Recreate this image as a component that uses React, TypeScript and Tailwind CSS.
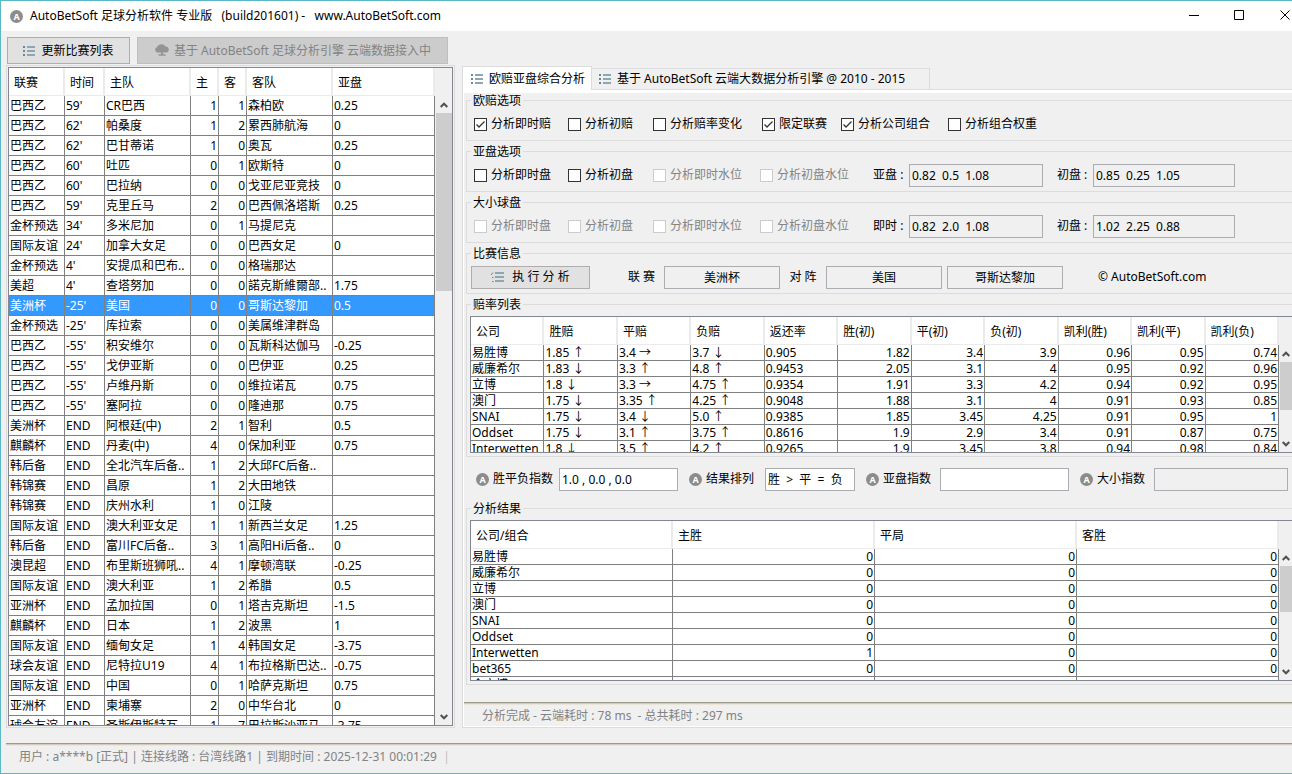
import React from "react";

type Match = [string, string, string, string, string, string, string];

const matches: Match[] = [
  ["巴西乙", "59'", "CR巴西", "1", "1", "森柏欧", "0.25"],
  ["巴西乙", "62'", "帕桑度", "1", "2", "累西肺航海", "0"],
  ["巴西乙", "62'", "巴甘蒂诺", "1", "0", "奥瓦", "0.25"],
  ["巴西乙", "60'", "吐匹", "0", "1", "欧斯特", "0"],
  ["巴西乙", "60'", "巴拉纳", "0", "0", "戈亚尼亚竞技", "0"],
  ["巴西乙", "59'", "克里丘马", "2", "0", "巴西佩洛塔斯", "0.25"],
  ["金杯预选", "34'", "多米尼加", "0", "1", "马提尼克", ""],
  ["国际友谊", "24'", "加拿大女足", "0", "0", "巴西女足", "0"],
  ["金杯预选", "4'", "安提瓜和巴布..", "0", "0", "格瑞那达", ""],
  ["美超", "4'", "查塔努加", "0", "0", "諾克斯維爾部..", "1.75"],
  ["美洲杯", "-25'", "美国", "0", "0", "哥斯达黎加", "0.5"],
  ["金杯预选", "-25'", "库拉索", "0", "0", "美属维津群岛", ""],
  ["巴西乙", "-55'", "积安维尔", "0", "0", "瓦斯科达伽马", "-0.25"],
  ["巴西乙", "-55'", "戈伊亚斯", "0", "0", "巴伊亚", "0.25"],
  ["巴西乙", "-55'", "卢维丹斯", "0", "0", "维拉诺瓦", "0.75"],
  ["巴西乙", "-55'", "塞阿拉", "0", "0", "隆迪那", "0.75"],
  ["美洲杯", "END", "阿根廷(中)", "2", "1", "智利", "0.5"],
  ["麒麟杯", "END", "丹麦(中)", "4", "0", "保加利亚", "0.75"],
  ["韩后备", "END", "全北汽车后备..", "1", "2", "大邱FC后备..", ""],
  ["韩锦赛", "END", "昌原", "1", "2", "大田地铁", ""],
  ["韩锦赛", "END", "庆州水利", "1", "0", "江陵", ""],
  ["国际友谊", "END", "澳大利亚女足", "1", "1", "新西兰女足", "1.25"],
  ["韩后备", "END", "富川FC后备..", "3", "1", "高阳Hi后备..", "0"],
  ["澳昆超", "END", "布里斯班狮吼..", "4", "1", "摩顿湾联", "-0.25"],
  ["国际友谊", "END", "澳大利亚", "1", "2", "希腊", "0.5"],
  ["亚洲杯", "END", "孟加拉国", "0", "1", "塔吉克斯坦", "-1.5"],
  ["麒麟杯", "END", "日本", "1", "2", "波黑", "1"],
  ["国际友谊", "END", "缅甸女足", "1", "4", "韩国女足", "-3.75"],
  ["球会友谊", "END", "尼特拉U19", "4", "1", "布拉格斯巴达..", "-0.75"],
  ["国际友谊", "END", "中国", "0", "1", "哈萨克斯坦", "0.75"],
  ["亚洲杯", "END", "柬埔寨", "2", "0", "中华台北", "0"],
  ["球会友谊", "END", "圣斯伊斯特瓦", "1", "7", "巴拉斯沙亚马", "-3.75"],
];

const odds: string[][] = [
  ["易胜博", "1.85 ↑", "3.4 →", "3.7 ↓", "0.905", "1.82", "3.4", "3.9", "0.96", "0.95", "0.74"],
  ["威廉希尔", "1.83 ↓", "3.3 ↑", "4.8 ↑", "0.9453", "2.05", "3.1", "4", "0.95", "0.92", "0.96"],
  ["立博", "1.8 ↓", "3.3 →", "4.75 ↑", "0.9354", "1.91", "3.3", "4.2", "0.94", "0.92", "0.95"],
  ["澳门", "1.75 ↓", "3.35 ↑", "4.25 ↑", "0.9048", "1.88", "3.1", "4", "0.91", "0.93", "0.85"],
  ["SNAI", "1.75 ↓", "3.4 ↓", "5.0 ↑", "0.9385", "1.85", "3.45", "4.25", "0.91", "0.95", "1"],
  ["Oddset", "1.75 ↓", "3.1 ↑", "3.75 ↑", "0.8616", "1.9", "2.9", "3.4", "0.91", "0.87", "0.75"],
  ["Interwetten", "1.8 ↓", "3.5 ↑", "4.2 ↑", "0.9265", "1.9", "3.45", "3.8", "0.94", "0.98", "0.84"],
];

const results: string[][] = [
  ["易胜博", "0", "0", "0"],
  ["威廉希尔", "0", "0", "0"],
  ["立博", "0", "0", "0"],
  ["澳门", "0", "0", "0"],
  ["SNAI", "0", "0", "0"],
  ["Oddset", "0", "0", "0"],
  ["Interwetten", "1", "0", "0"],
  ["bet365", "0", "0", "0"],
  ["金宝博", "0", "0", "0"],
];

function ListIcon() {
  return (
    <svg width="12" height="10" viewBox="0 0 12 10" className="shrink-0" shapeRendering="crispEdges" aria-hidden="true">
      <path d="M0 0h2v2H0zM0 4h2v2H0zM0 8h2v2H0z" fill="#66899a" />
      <path d="M4 0h8v2H4zM4 4h8v2H4zM4 8h8v2H4z" fill="#8ea6b2" />
    </svg>
  );
}

function RunIcon() {
  return (
    <svg width="13" height="11" viewBox="0 0 13 11" className="shrink-0" aria-hidden="true">
      <path d="M0 3L2 0.5M1 5.5h1.5M1 9.5h1.5" stroke="#66899a" fill="none" />
      <path d="M4 0h9v2H4zM4 4h9v2H4zM4 8h9v2H4z" fill="#8ea6b2" shapeRendering="crispEdges" />
    </svg>
  );
}

function CloudIcon() {
  return (
    <svg width="16" height="13" viewBox="0 0 16 13" className="shrink-0" aria-hidden="true">
      <path
        d="M3 8.6A2.9 2.9 0 0 1 2.8 3.3 4.8 4.2 0 0 1 11.6 2.5 3.2 3.2 0 0 1 13 8.6z"
        fill="#949494"
      />
      <path d="M7 8h2v3H7zM4.5 10.2h7v1.6h-7z" fill="#949494" />
    </svg>
  );
}

function Badge() {
  return (
    <span
      aria-hidden="true"
      className="flex size-[13px] shrink-0 items-center justify-center rounded-full bg-[#8c8c8c] text-[9px] leading-[13px] font-bold text-white"
    >
      A
    </span>
  );
}

function Chevron({ up = false }: { up?: boolean }) {
  return (
    <svg width="8" height="6" viewBox="0 0 8 6" aria-hidden="true">
      <path d={up ? "M0.7 5L4 1.7L7.3 5" : "M0.7 1L4 4.3L7.3 1"} fill="none" stroke="#505050" strokeWidth="2" />
    </svg>
  );
}

function ScrollBar({ className, thumb }: { className: string; thumb: string }) {
  return (
    <div className={`flex shrink-0 flex-col bg-[#f0f0f0] ${className}`} aria-hidden="true">
      <div className="h-[28px]" />
      <div className="flex h-[17px] items-center justify-center">
        <Chevron up />
      </div>
      <div className={`w-full bg-[#cdcdcd] ${thumb}`} />
      <div className="grow" />
      <div className="flex h-[17px] items-center justify-center">
        <Chevron />
      </div>
    </div>
  );
}

function HeadCell({ children }: { children: React.ReactNode }) {
  return (
    <th
      scope="col"
      className="h-7 border-r-2 border-b border-[#ebebeb] bg-white pt-[3px] pl-[5px] text-left font-normal whitespace-nowrap"
    >
      {children}
    </th>
  );
}

function CompanyTable({
  label,
  head,
  rows,
  leftCount,
}: {
  label: string;
  head: string[];
  rows: string[][];
  leftCount: number;
}) {
  return (
    <table aria-label={label} className="w-full table-fixed border-separate border-spacing-0">
      <thead>
        <tr>
          {head.map((h) => (
            <HeadCell key={h}>{h}</HeadCell>
          ))}
        </tr>
      </thead>
      <tbody>
        {rows.map((row) => (
          <tr key={row[0]}>
            {row.map((cell, i) => (
              <td
                key={i}
                className={`h-4 border-r border-b border-[#808080] bg-white p-0 leading-[15px] whitespace-nowrap ${
                  i < leftCount ? "pl-px text-left" : "pr-px text-right"
                }`}
              >
                {cell}
              </td>
            ))}
          </tr>
        ))}
      </tbody>
    </table>
  );
}

function Check({ label, checked = false, disabled = false }: { label: string; checked?: boolean; disabled?: boolean }) {
  return (
    <label className={`flex items-center gap-1 whitespace-nowrap ${disabled ? "text-[#838383]" : ""}`}>
      <span className="grid">
        <input
          type="checkbox"
          defaultChecked={checked}
          disabled={disabled}
          className="peer size-[13px] appearance-none border border-[#333333] bg-white [grid-area:1/1] disabled:border-[#cccccc]"
        />
        <svg
          viewBox="0 0 13 13"
          className="pointer-events-none invisible size-[13px] [grid-area:1/1] peer-checked:visible"
          aria-hidden="true"
        >
          <path d="M2.5 6.5L5 9L10.5 3.5" fill="none" stroke="#333333" strokeWidth="1.3" />
        </svg>
      </span>
      {label}
    </label>
  );
}

function Group({ title, className = "", children }: { title: string; className?: string; children: React.ReactNode }) {
  return (
    <fieldset className={`min-w-0 border border-r-0 border-[#dcdcdc] ${className}`}>
      <legend className="ml-1 px-0.5 leading-[15px]">{title}</legend>
      {children}
    </fieldset>
  );
}

const box = "h-[23px] min-w-0 border border-[#abadb3] px-0.5 outline-none";
const optionGrid = "grid h-8 items-center pl-[7px]";

function HandicapRow({ prefix, first, a, b, off }: { prefix: string; first: string; a: string; b: string; off: boolean }) {
  return (
    <div className={`${optionGrid} grid-cols-[94px_85px_107px_113px_36px_148px_36px_142px]`}>
      <Check label="分析即时盘" disabled={off} />
      <Check label="分析初盘" disabled={off} />
      <Check label="分析即时水位" disabled />
      <Check label="分析初盘水位" disabled />
      <label htmlFor={`${prefix}-a`} className="whitespace-nowrap">
        {first} :
      </label>
      <input id={`${prefix}-a`} readOnly defaultValue={a} className={`${box} w-[134px]`} />
      <label htmlFor={`${prefix}-b`} className="whitespace-nowrap">
        初盘 :
      </label>
      <input id={`${prefix}-b`} readOnly defaultValue={b} className={`${box} w-[142px]`} />
    </div>
  );
}

function IndexField({ id, label, value, className }: { id: string; label: string; value: string; className: string }) {
  return (
    <div className="flex items-center">
      <Badge />
      <label htmlFor={id} className="pl-1 whitespace-nowrap">
        {label}
      </label>
      <input id={id} defaultValue={value} className={`${box} ml-auto ${className}`} />
    </div>
  );
}

function Separator() {
  return (
    <div className="shrink-0">
      <div className="h-px bg-[#9d998a]" />
      <div className="h-px bg-[#d3ccba]" />
      <div className="h-px bg-[#eae6d9]" />
    </div>
  );
}

export default function App() {
  return (
    <div className="flex h-screen flex-col overflow-hidden border border-r-0 border-[#5bb8c9] bg-[#f0f0f0] font-['Noto_Sans','Noto_Sans_CJK_SC',sans-serif] text-[12px] leading-4 text-black">
      <header className="flex h-[30px] shrink-0 items-center bg-white pl-[9px]">
        <Badge />
        <h1 className="pl-[7px] whitespace-pre">AutoBetSoft 足球分析软件 专业版   (build201601) -   www.AutoBetSoft.com</h1>
        <div className="ml-auto flex items-center pb-0.5">
          <button type="button" aria-label="最小化" className="flex w-[45px] items-center justify-center">
            <svg width="10" height="10" viewBox="0 0 10 10" aria-hidden="true">
              <path d="M0 5.5h10" stroke="#000" />
            </svg>
          </button>
          <button type="button" aria-label="最大化" className="flex w-[45px] items-center justify-center">
            <svg width="10" height="10" viewBox="0 0 10 10" aria-hidden="true">
              <path d="M0.5 0.5h9v9h-9z" fill="none" stroke="#000" />
            </svg>
          </button>
          <button type="button" aria-label="关闭" className="flex w-[31px] items-center justify-end pr-[2px]">
            <svg width="10" height="10" viewBox="0 0 10 10" aria-hidden="true">
              <path d="M0.5 0.5l9 9M9.5 0.5l-9 9" stroke="#000" />
            </svg>
          </button>
        </div>
      </header>

      <div className="flex h-[34px] shrink-0 gap-[7px] pt-1.5 pl-1.5">
        <button
          type="button"
          className="flex h-[27px] w-[123px] items-center justify-center gap-1.5 border border-[#adadad] bg-[#e1e1e1] whitespace-nowrap"
        >
          <ListIcon />
          更新比赛列表
        </button>
        <button
          type="button"
          disabled
          className="flex h-[27px] w-[311px] items-center justify-center gap-1 border border-[#bfbfbf] bg-[#cccccc] whitespace-nowrap text-[#838383]"
        >
          <CloudIcon />
          基于 AutoBetSoft 足球分析引擎 云端数据接入中
        </button>
      </div>

      <main className="flex min-h-0 grow gap-[7px] pl-[5px]">
        <section className="flex shrink-0 border border-[#dcdcdc] p-px">
          <div className="flex border border-[#828790]">
            <div className="min-h-0 w-[426px] overflow-hidden bg-white">
              <table aria-label="比赛列表" className="w-full table-fixed border-separate border-spacing-0">
                <colgroup>
                  <col className="w-14" />
                  <col className="w-10" />
                  <col className="w-[86px]" />
                  <col className="w-7" />
                  <col className="w-7" />
                  <col className="w-[86px]" />
                  <col />
                </colgroup>
                <thead>
                  <tr>
                    <HeadCell>联赛</HeadCell>
                    <HeadCell>时间</HeadCell>
                    <HeadCell>主队</HeadCell>
                    <HeadCell>主</HeadCell>
                    <HeadCell>客</HeadCell>
                    <HeadCell>客队</HeadCell>
                    <HeadCell>亚盘</HeadCell>
                  </tr>
                </thead>
                <tbody>
                  {matches.map((m, r) => (
                    <tr key={r} className={m[2] === "美国" ? "bg-[#3399ff] text-white" : "bg-white"}>
                      {m.map((cell, i) => (
                        <td
                          key={i}
                          className={`h-5 border-r border-b border-[#808080] p-0 whitespace-nowrap ${
                            i === 3 || i === 4 ? "pr-px text-right" : "pl-px text-left"
                          }`}
                        >
                          {cell}
                        </td>
                      ))}
                    </tr>
                  ))}
                </tbody>
              </table>
            </div>
            <ScrollBar className="w-[17px] pl-px" thumb="h-[178px]" />
          </div>
        </section>

        <section className="flex min-w-0 grow flex-col pt-px">
          <div role="tablist" className="flex h-[23px] shrink-0 items-end">
            <button
              type="button"
              role="tab"
              aria-selected="true"
              className="relative -mb-px flex h-6 w-[130px] items-center gap-1.5 border border-b-0 border-[#dcdcdc] bg-white pl-2 whitespace-nowrap"
            >
              <ListIcon />
              欧赔亚盘综合分析
            </button>
            <button
              type="button"
              role="tab"
              aria-selected="false"
              className="flex h-[21px] w-[338px] items-center gap-1.5 border border-b-0 border-l-0 border-[#dcdcdc] pl-[7px] whitespace-nowrap"
            >
              <ListIcon />
              基于 AutoBetSoft 云端大数据分析引擎 @ 2010 - 2015
            </button>
          </div>

          <div className="flex min-h-0 grow flex-col border border-r-0 border-[#dcdcdc] bg-white pt-[3px] pb-px pl-px">
            <div className="flex min-h-0 grow flex-col bg-[#f0f0f0]">
              <div className="flex min-h-0 grow flex-col pl-[2px]">
                <Group title="欧赔选项" className="mb-[3px] shrink-0">
                  <div className={`${optionGrid} grid-cols-[94px_85px_109px_79px_107px_auto]`}>
                    <Check label="分析即时赔" checked />
                    <Check label="分析初赔" />
                    <Check label="分析赔率变化" />
                    <Check label="限定联赛" checked />
                    <Check label="分析公司组合" checked />
                    <Check label="分析组合权重" />
                  </div>
                </Group>
                <Group title="亚盘选项" className="mb-[3px] shrink-0">
                  <HandicapRow prefix="asia" first="亚盘" a="0.82  0.5  1.08" b="0.85  0.25  1.05" off={false} />
                </Group>
                <Group title="大小球盘" className="mb-[3px] shrink-0">
                  <HandicapRow prefix="total" first="即时" a="0.82  2.0  1.08" b="1.02  2.25  0.88" off />
                </Group>
                <Group title="比赛信息" className="mb-[3px] shrink-0">
                  <div className="flex h-8 items-center pl-1">
                    <button
                      type="button"
                      className="flex h-[23px] w-[119px] items-center justify-center gap-2 border border-[#adadad] bg-[#e1e1e1] whitespace-nowrap"
                    >
                      <RunIcon />执 行 分 析
                    </button>
                    <label htmlFor="league" className="w-[74px] pr-[9px] text-right whitespace-nowrap">
                      联 赛
                    </label>
                    <input id="league" readOnly defaultValue="美洲杯" className={`${box} w-[116px] text-center`} />
                    <label htmlFor="home" className="w-[46px] text-center whitespace-nowrap">
                      对 阵
                    </label>
                    <input id="home" readOnly defaultValue="美国" className={`${box} w-[116px] text-center`} />
                    <input
                      aria-label="客队"
                      readOnly
                      defaultValue="哥斯达黎加"
                      className={`${box} ml-[5px] w-[116px] text-center`}
                    />
                    <span className="pl-[35px] whitespace-nowrap">© AutoBetSoft.com</span>
                  </div>
                </Group>
                <Group title="赔率列表" className="shrink-0">
                  <div className="pt-1 pb-[3px] pl-[3px]">
                    <div className="flex h-[137px] border border-r-0 border-[#828790]">
                      <div className="min-w-0 grow overflow-hidden bg-white">
                        <CompanyTable
                          label="赔率列表"
                          head={[
                            "公司",
                            "胜赔",
                            "平赔",
                            "负赔",
                            "返还率",
                            "胜(初)",
                            "平(初)",
                            "负(初)",
                            "凯利(胜)",
                            "凯利(平)",
                            "凯利(负)",
                          ]}
                          rows={odds}
                          leftCount={5}
                        />
                      </div>
                      <ScrollBar className="w-[13px] pl-px" thumb="h-[48px]" />
                    </div>
                  </div>
                </Group>

                <div className="grid h-[44px] shrink-0 grid-cols-[202px_166px_203px_208px] items-center gap-[11px] pl-2.5">
                  <IndexField id="idx-result" label="胜平负指数" value="1.0 , 0.0 , 0.0" className="w-[119px] bg-white" />
                  <IndexField id="idx-order" label="结果排列" value="胜  >  平  =  负" className="w-[90px] bg-white" />
                  <IndexField id="idx-asia" label="亚盘指数" value="" className="w-[129px] bg-white" />
                  <IndexField id="idx-total" label="大小指数" value="" className="w-[134px]" />
                </div>

                <Group title="分析结果" className="flex min-h-0 grow flex-col">
                  <div className="flex min-h-0 grow flex-col pt-1 pb-[3px] pl-[3px]">
                    <div className="flex h-[161px] min-h-0 grow border border-r-0 border-[#828790]">
                      <div className="min-w-0 grow overflow-hidden bg-white">
                        <CompanyTable
                          label="分析结果"
                          head={["公司/组合", "主胜", "平局", "客胜"]}
                          rows={results}
                          leftCount={1}
                        />
                      </div>
                      <ScrollBar className="w-[13px] pl-px" thumb="h-[46px]" />
                    </div>
                  </div>
                </Group>
              </div>
              <div className="h-[17px] shrink-0" />
              <Separator />
              <p className="h-[21px] shrink-0 pt-[3px] pl-[18px] whitespace-pre text-[#838383]">
                分析完成 - 云端耗时 : 78 ms  - 总共耗时 : 297 ms
              </p>
            </div>
          </div>
        </section>
      </main>

      <footer className="shrink-0 pt-[15px] pl-[5px]">
        <Separator />
        <p className="h-[27px] pt-[3px] pl-[13px] whitespace-pre text-[#838383]">
          用户 : a****b [正式] | 连接线路 : 台湾线路1 | 到期时间 : 2025-12-31 00:01:29  <span className="text-[#c0c0c0]">|</span>
        </p>
      </footer>
    </div>
  );
}
